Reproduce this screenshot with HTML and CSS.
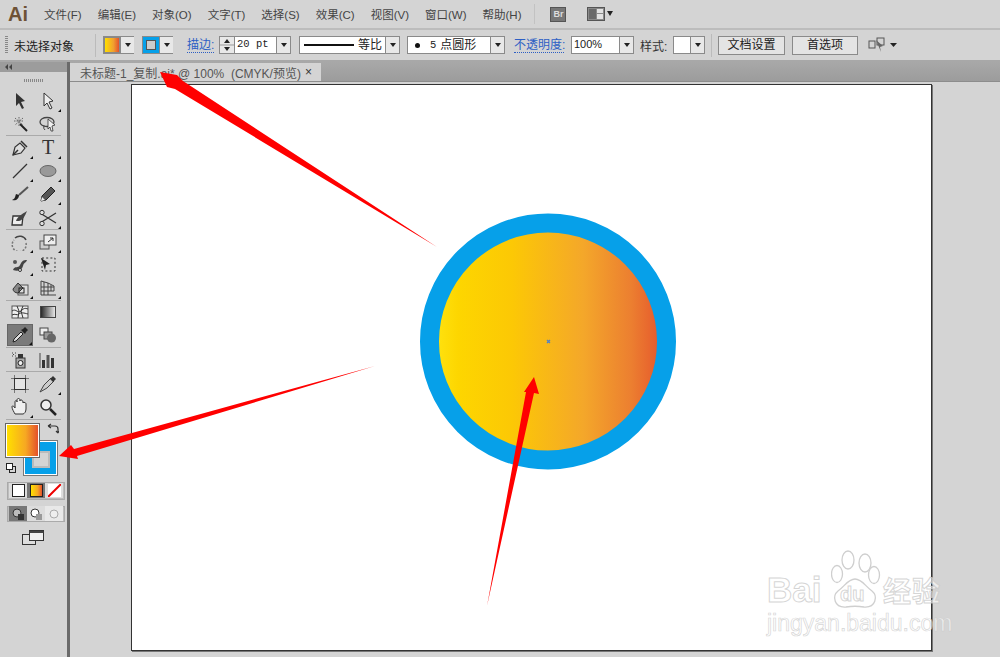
FILE: index.html
```html
<!DOCTYPE html>
<html lang="en">
<head>
    <meta charset="UTF-8">
    <meta name="viewport" content="width=device-width, initial-scale=1.0">
    <title>Adobe Illustrator</title>
    <link rel="stylesheet" href="styles.css">
</head>
<body>
    <header class="menubar">
        <span class="app-logo">Ai</span>
        <nav class="menu">
            <a>文件(F)</a>
            <a>编辑(E)</a>
            <a>对象(O)</a>
            <a>文字(T)</a>
            <a>选择(S)</a>
            <a>效果(C)</a>
            <a>视图(V)</a>
            <a>窗口(W)</a>
            <a>帮助(H)</a>
        </nav>
        <span class="menu-sep"></span>
        <span class="bridge-btn">Br</span>
        <span class="layout-btn">
            <svg width="26" height="14" viewBox="0 0 26 14">
                <rect x="0.5" y="0.5" width="17" height="13" fill="#8a8a8a" stroke="#555"/>
                <rect x="2" y="2" width="7" height="10" fill="#6a6a6a"/>
                <rect x="10" y="2" width="6" height="4" fill="#e2e2e2"/>
                <rect x="10" y="7" width="6" height="5" fill="#e2e2e2"/>
                <path d="M20 4h6l-3 5z" fill="#222"/>
            </svg>
        </span>
    </header>

    <div class="controlbar">
        <span class="grip"></span>
        <span class="status-text">未选择对象</span>
        <span class="bar-sep sep-first"></span>

        <span class="combo fill-combo">
            <span class="swatch-box"><span class="mini-gradient"></span></span>
            <span class="drop"></span>
        </span>
        <span class="combo stroke-combo">
            <span class="swatch-box"><span class="mini-stroke"></span></span>
            <span class="drop"></span>
        </span>

        <a class="link-label stroke-label">描边:</a>
        <span class="combo weight-combo">
            <span class="spinner">
                <svg width="14" height="16" viewBox="0 0 14 16"><path d="M4 6l3-4 3 4zM4 10h6l-3 4z" fill="#222"/><path d="M0 8h14" stroke="#999"/></svg>
            </span>
            <span class="field mono">20 pt</span>
            <span class="drop"></span>
        </span>
        <span class="combo line-combo">
            <span class="field line-field"><span class="line-sample"></span>等比</span>
            <span class="drop"></span>
        </span>
        <span class="combo brush-combo">
            <span class="field brush-field"><span class="dot"></span><span class="mono">5</span> 点圆形</span>
            <span class="drop"></span>
        </span>

        <a class="link-label opacity-label">不透明度:</a>
        <span class="combo opacity-combo">
            <span class="field">100%</span>
            <span class="drop"></span>
        </span>
        <span class="plain-label">样式:</span>
        <span class="combo style-combo">
            <span class="field"></span>
            <span class="drop"></span>
        </span>
        <span class="bar-sep sep-last"></span>
        <button class="bar-btn doc-btn">文档设置</button>
        <button class="bar-btn pref-btn">首选项</button>
        <svg class="arrange-icon" width="30" height="16" viewBox="0 0 30 16">
            <rect x="1" y="4" width="6" height="7" fill="none" stroke="#555"/>
            <rect x="9" y="1" width="7" height="7" fill="none" stroke="#555"/>
            <path d="M8 3l7 6-3 1 1 5z" fill="#666"/>
            <path d="M22 6h7l-3.500 4z" fill="#222"/>
        </svg>
    </div>

    <div class="main">
        <aside class="toolbox">
            <div class="toolbox-head">
                <svg width="8" height="6" viewBox="0 0 8 6"><path d="M3 0v6L0 3zM7 0v6L4 3z" fill="#444"/></svg>
            </div>
            <div class="toolbox-grip"></div>

            <div class="tool-group">
                <span class="tool"><svg viewBox="0 0 18 18"><path d="M5 1l9 8-4 1 3 6-2 1-3-6-3 3z" fill="#333"/></svg></span>
                <span class="tool more"><svg viewBox="0 0 18 18"><path d="M5 1l9 8-4 1 3 6-2 1-3-6-3 3z" fill="#eee" stroke="#333"/></svg></span>
                <span class="tool"><svg viewBox="0 0 18 18"><path d="M8 2v9M3 6h10M4 3l8 7M12 3l-8 7" stroke="#666" stroke-dasharray="1.500 1" fill="none"/><path d="M9 9l7 7" stroke="#222" stroke-width="2"/></svg></span>
                <span class="tool"><svg viewBox="0 0 18 18"><ellipse cx="8" cy="7" rx="7" ry="4.500" fill="none" stroke="#444" stroke-width="1.300"/><path d="M5 10q-1 4 1 5" fill="none" stroke="#444"/><path d="M9 4l7 6-3 1 1 5-2 0-1-4-2 2z" fill="#eee" stroke="#333" stroke-width=".8"/></svg></span>
            </div>

            <div class="tool-group">
                <span class="tool more"><svg viewBox="0 0 18 18"><path d="M2 16l2-8 5-4 5 5-4 5z" fill="#ddd" stroke="#333" stroke-width="1.200"/><path d="M2 16l5-5M10 2l6 6" stroke="#333" stroke-width="1.500"/></svg></span>
                <span class="tool more type-tool">T</span>
                <span class="tool more"><svg viewBox="0 0 18 18"><path d="M2 16L16 2" stroke="#333" stroke-width="1.300"/></svg></span>
                <span class="tool more"><svg viewBox="0 0 18 18"><ellipse cx="9" cy="9" rx="8" ry="5.500" fill="#999" stroke="#666"/></svg></span>
                <span class="tool"><svg viewBox="0 0 18 18"><path d="M8 10L17 2" stroke="#555" stroke-width="2"/><path d="M1 15c4 1 7-1 7-5l-3-1c-1 3-1 5-4 6z" fill="#222"/></svg></span>
                <span class="tool more"><svg viewBox="0 0 18 18"><path d="M2 16l1-5 9-9 4 4-9 9z" fill="#555" stroke="#222"/><path d="M2 16l1-4 3 3z" fill="#eee"/></svg></span>
                <span class="tool"><svg viewBox="0 0 18 18"><path d="M2 7h10l-1 9H1z" fill="#eee" stroke="#333" stroke-width="1.300"/><path d="M5 12c1-4 6-7 11-10-2 5-4 9-8 10z" fill="#444"/></svg></span>
                <span class="tool more"><svg viewBox="0 0 18 18"><path d="M1 4l16 10M1 14L17 4" stroke="#333" stroke-width="1.300"/><circle cx="3" cy="3.500" r="2.200" fill="#ddd" stroke="#333"/><circle cx="3" cy="14.500" r="2.200" fill="#ddd" stroke="#333"/></svg></span>
            </div>

            <div class="tool-group">
                <span class="tool more"><svg viewBox="0 0 18 18"><path d="M4 5a7 7 0 0 1 11 2" fill="none" stroke="#444" stroke-width="1.500"/><path d="M15 10a7 7 0 1 1-12-3" fill="none" stroke="#777" stroke-width="1.500" stroke-dasharray="2 1.500"/></svg></span>
                <span class="tool more"><svg viewBox="0 0 18 18"><rect x="1" y="8" width="9" height="8" fill="#ccc" stroke="#555"/><rect x="5" y="2" width="12" height="10" fill="#eee" stroke="#444"/><path d="M9 9l5-4M11 5h3v3" stroke="#333" fill="none"/></svg></span>
                <span class="tool more"><svg viewBox="0 0 18 18"><path d="M2 14c2-5 5-1 7-5s3-5 7-5c-1 3-3 2-4 6s-5 6-10 4z" fill="#444"/><circle cx="4" cy="6" r="2" fill="#555"/><circle cx="9" cy="14" r="1.500" fill="#eee" stroke="#333"/></svg></span>
                <span class="tool"><svg viewBox="0 0 18 18"><rect x="3" y="2" width="13" height="13" fill="none" stroke="#333" stroke-dasharray="2 2.200"/><path d="M2 2l9 6-4 1-1 5z" fill="#222"/></svg></span>
                <span class="tool more"><svg viewBox="0 0 18 18"><rect x="7" y="6" width="10" height="10" fill="#ddd" stroke="#555"/><path d="M2 10l5-6 5 5-5 5c-3 0-5-2-5-4z" fill="#888" stroke="#333"/><rect x="8" y="9" width="5" height="5" fill="none" stroke="#222"/></svg></span>
                <span class="tool more"><svg viewBox="0 0 18 18"><path d="M2 2v14h15M2 2l7 2v12M9 4l6 3v5H2M5 3v13M12 6v6M2 8h13" fill="none" stroke="#444"/></svg></span>
            </div>

            <div class="tool-group">
                <span class="tool"><svg viewBox="0 0 18 18"><rect x="1" y="3" width="16" height="12" fill="#eee" stroke="#555"/><path d="M1 8c4-3 6 3 9 0s4-3 7-2M1 12c3-2 5 1 7-1s5-1 9 0M6 3l2 5-1 7M12 3l-2 5 2 7" fill="none" stroke="#333"/></svg></span>
                <span class="tool"><svg viewBox="0 0 18 18"><defs><linearGradient id="grayRamp"><stop offset="0" stop-color="#222"/><stop offset="1" stop-color="#eee"/></linearGradient></defs><rect x="1.500" y="3.500" width="15" height="11" fill="url(#grayRamp)" stroke="#444"/></svg></span>
                <span class="tool more active"><svg viewBox="0 0 18 18"><path d="M2 16l1-3 7-7 2 2-7 7z" fill="#ddd" stroke="#222"/><path d="M10 4l4 4 1-2 2-2-3-3-2 2z" fill="#222"/></svg></span>
                <span class="tool"><svg viewBox="0 0 18 18"><rect x="1" y="2" width="8" height="7" fill="#eee" stroke="#444"/><rect x="5" y="6" width="8" height="7" fill="#999" stroke="#444"/><circle cx="12.500" cy="12" r="4.500" fill="#666"/></svg></span>
            </div>

            <div class="tool-group">
                <span class="tool"><svg viewBox="0 0 18 18"><rect x="5" y="7" width="9" height="10" fill="#aaa" stroke="#333"/><circle cx="9.500" cy="12" r="2.500" fill="#eee" stroke="#222"/><rect x="7" y="3" width="5" height="4" fill="#333"/><path d="M1 2h1M4 2h1M1 5h1M4 5h1M2 3.500h1" stroke="#444"/></svg></span>
                <span class="tool"><svg viewBox="0 0 18 18"><path d="M1 2v15" stroke="#444"/><rect x="3" y="9" width="3" height="8" fill="#333"/><rect x="7.500" y="4" width="3" height="13" fill="#555"/><rect x="12" y="7" width="3" height="10" fill="#333"/></svg></span>
            </div>

            <div class="tool-group">
                <span class="tool"><svg viewBox="0 0 18 18"><rect x="3.500" y="3.500" width="11" height="11" fill="#e4e4e4" stroke="#333"/><path d="M3.500 0v3M14.500 0v3M3.500 15v3M14.500 15v3M0 3.500h3M15 3.500h3M0 14.500h3M15 14.500h3" stroke="#777"/></svg></span>
                <span class="tool more"><svg viewBox="0 0 18 18"><path d="M1 17l4-7 7-7 3 3-7 7z" fill="#ccc" stroke="#444"/><path d="M11 4l3-3 3 3-3 3z" fill="#333"/></svg></span>
                <span class="tool more"><svg viewBox="0 0 18 18"><path d="M4 16c-1-2-3-5-3-7s2-1 3 1V4c0-2 2-2 2 0V2c0-2 3-2 3 0v1c0-2 3-1 3 1v1c0-1 3-1 3 1v5c0 3-2 5-3 5z" fill="#f0f0f0" stroke="#333"/></svg></span>
                <span class="tool"><svg viewBox="0 0 18 18"><circle cx="7" cy="7" r="5" fill="#eee" stroke="#333" stroke-width="1.500"/><path d="M11 11l6 6" stroke="#222" stroke-width="2.500"/></svg></span>
            </div>

            <div class="color-well">
                <span class="stroke-large"><span class="stroke-hole"></span></span>
                <span class="fill-large"></span>
                <svg class="swap-icon" width="12" height="12" viewBox="0 0 12 12"><path d="M1 3h7q3 0 3 3v4M1 3l3-2M1 3l3 2M11 10l-2-2M11 10l1-2" fill="none" stroke="#333" stroke-width="1.200"/></svg>
                <span class="default-icon"></span>
            </div>

            <div class="mode-row paint-row">
                <span class="mode-cell"><span class="paint-none"></span></span>
                <span class="mode-cell on"><span class="paint-grad"></span></span>
                <span class="mode-cell"><svg width="13" height="13" viewBox="0 0 13 13"><rect width="13" height="13" fill="#fff"/><path d="M0 13L13 0" stroke="#e00" stroke-width="2"/></svg></span>
            </div>
            <div class="mode-row draw-row">
                <span class="mode-cell on"><svg width="12" height="12" viewBox="0 0 12 12"><circle cx="5" cy="5" r="4" fill="#bbb" stroke="#333"/><rect x="6" y="6" width="6" height="6" fill="#333"/></svg></span>
                <span class="mode-cell"><svg width="12" height="12" viewBox="0 0 12 12"><circle cx="5" cy="5" r="4" fill="#fff" stroke="#333"/><rect x="6" y="6" width="6" height="6" fill="#999"/></svg></span>
                <span class="mode-cell faded"><svg width="12" height="12" viewBox="0 0 12 12"><circle cx="6" cy="6" r="4" fill="#eee" stroke="#aaa"/></svg></span>
            </div>
            <svg class="screen-icon" width="22" height="15" viewBox="0 0 22 15">
                <rect x="0.500" y="4.500" width="13" height="10" fill="#ddd" stroke="#333"/>
                <rect x="7.500" y="0.500" width="14" height="10" fill="#f0f0f0" stroke="#333"/>
                <path d="M7.500 1h14v2h-14z" fill="#444"/>
            </svg>
        </aside>

        <section class="workspace">
            <div class="tabstrip">
                <div class="doc-tab">
                    <span>未标题-1_复制.ai* @ 100%  (CMYK/预览)</span>
                    <span class="tab-close">×</span>
                </div>
            </div>
            <div class="canvas">
                <div class="artboard">
                    <svg class="art" width="800" height="566" viewBox="0 0 800 566">
                        <defs>
                            <linearGradient id="sun">
                                <stop offset="0" stop-color="#ffe614"/>
                                <stop offset="0.12" stop-color="#fdd600"/>
                                <stop offset="0.35" stop-color="#fcc805"/>
                                <stop offset="0.65" stop-color="#f4a72a"/>
                                <stop offset="0.85" stop-color="#ec7f30"/>
                                <stop offset="1" stop-color="#e4512c"/>
                            </linearGradient>
                        </defs>
                        <circle cx="416" cy="256.500" r="118.500" fill="url(#sun)" stroke="#06a0e9" stroke-width="19"/>
                        <path d="M415 255l3 3M418 255l-3 3" stroke="#4a7fd0" stroke-width="1.200"/>
                    </svg>
                </div>
            </div>
        </section>
    </div>

    <!-- annotation arrows drawn over the screenshot -->
    <svg class="arrows" width="1000" height="657" viewBox="0 0 1000 657">
        <path d="M437 247L183 81 177 75 160 72 167 87 175 89z" fill="#ff0000"/>
        <path d="M375 366L74 449 71 445 59 456 78 459 77 456z" fill="#ff0000"/>
        <path d="M487 606L526 392 524 392 534 377 539 394 534 393z" fill="#ff0000"/>
    </svg>

    <div class="watermark">
        <svg class="paw" width="50" height="60" viewBox="0 0 50 60">
            <g fill="#fff" fill-opacity=".6" stroke="#cfcfcf" stroke-width="1.300">
                <ellipse cx="17" cy="10" rx="6" ry="9"/>
                <ellipse cx="34" cy="13" rx="6" ry="9"/>
                <ellipse cx="6" cy="24" rx="5.500" ry="8.500"/>
                <ellipse cx="43" cy="25" rx="5.500" ry="8.500"/>
                <path d="M24 29c7 0 10 7 17 12 6 5 4 17-8 16-6-1-12-1-18 0-12 1-14-11-8-16 7-5 10-12 17-12z"/>
            </g>
        </svg>
        <div class="wm-brand"><span class="wm-bai">Bai</span><span class="wm-du">du</span><span class="wm-cn">经验</span></div>
        <div class="wm-url">jingyan.baidu.com</div>
    </div>
</body>
</html>
```

FILE: styles.css
```css
* {
    box-sizing: border-box;
}
body {
    font-family: "Liberation Sans", "Noto Sans CJK SC", sans-serif;
    font-size: 11px;
    background-color: #d4d4d4;
    color: #333;
    margin: 0;
    padding: 0;
    width: 1000px;
    height: 657px;
    overflow: hidden;
    position: relative;
}
.menubar {
    height: 30px;
    display: flex;
    align-items: center;
    border-bottom: 2px solid #bcbcbc;
    padding-left: 8px;
}
.app-logo {
    font-size: 20px;
    font-weight: bold;
    color: #6e5236;
    width: 36px;
}
.menu {
    display: flex;
    gap: 16px;
    font-size: 11.500px;
}
.menu a {
    white-space: nowrap;
    color: #444;
}
.menu-sep {
    width: 1px;
    height: 20px;
    background-color: #c2c2c2;
    margin-left: 13px;
}
.bridge-btn {
    width: 16px;
    height: 15px;
    margin-left: 15px;
    background-color: #777;
    border: 1px solid #555;
    color: #ddd;
    font-size: 9px;
    font-weight: bold;
    text-align: center;
    line-height: 13px;
}
.layout-btn {
    margin-left: 21px;
    display: flex;
}
.controlbar {
    height: 32px;
    display: flex;
    align-items: center;
    border-bottom: 2px solid #a8a8a8;
    position: relative;
    padding-left: 5px;
}
.controlbar > * {
    flex-shrink: 0;
}
.grip {
    width: 3px;
    height: 18px;
    background-image: repeating-linear-gradient(#888 0 1px, transparent 1px 2px);
}
.status-text {
    font-size: 12px;
    width: 60px;
    margin-left: 6px;
    white-space: nowrap;
    color: #222;
}
.bar-sep {
    width: 1px;
    height: 23px;
    background-color: #bbb;
}
.sep-first {
    margin-left: 21px;
}
.combo {
    display: flex;
    height: 18px;
    border: 1px solid #8a8a8a;
    background-color: #e6e6e6;
}
.drop {
    width: 14px;
    flex-shrink: 0;
    border-left: 1px solid #8a8a8a;
    background: #e8e8e8;
    display: flex;
    align-items: center;
    justify-content: center;
}
.drop::after {
    content: "";
    border-left: 3.500px solid transparent;
    border-right: 3.500px solid transparent;
    border-top: 4px solid #222;
}
.field {
    flex: 1;
    background-color: #fff;
    line-height: 15px;
    padding-left: 2px;
    color: #222;
    white-space: nowrap;
    font-size: 11px;
}
.mono {
    font-family: "Liberation Mono", monospace;
    font-size: 10.500px;
}
.swatch-box {
    flex: 1;
    display: flex;
    align-items: center;
    justify-content: center;
}
.fill-combo {
    width: 31px;
    margin-left: 7px;
}
.stroke-combo {
    width: 31px;
    margin-left: 8px;
}
.mini-gradient {
    display: block;
    width: 16px;
    height: 16px;
    background: linear-gradient(90deg, #ffdf00, #f0a030 60%, #e4512c);
    border: 1px solid #888;
}
.mini-stroke {
    display: block;
    width: 16px;
    height: 16px;
    border: 3px solid #06a0e9;
    background-color: #ccc;
    outline: 1px solid #555;
    outline-offset: -4px;
}
.link-label {
    color: #2d5fc4;
    border-bottom: 1px dotted #2d5fc4;
    font-size: 12px;
    line-height: 14px;
    white-space: nowrap;
}
.stroke-label {
    margin-left: 14px;
    width: 27px;
}
.weight-combo {
    width: 72px;
    margin-left: 5px;
}
.spinner {
    width: 15px;
    flex-shrink: 0;
    border-right: 1px solid #8a8a8a;
    background-color: #e8e8e8;
    display: flex;
}
.line-combo {
    width: 101px;
    margin-left: 8px;
}
.line-field {
    display: flex;
    align-items: center;
    gap: 4px;
    font-size: 12px;
}
.line-sample {
    width: 50px;
    margin-left: 2px;
    border-top: 2px solid #111;
}
.brush-combo {
    width: 98px;
    margin-left: 7px;
}
.brush-field {
    display: flex;
    align-items: center;
    gap: 4px;
    font-size: 12px;
}
.dot {
    width: 5px;
    height: 5px;
    border-radius: 50%;
    background-color: #111;
    margin: 0 6px 0 5px;
}
.opacity-label {
    margin-left: 9px;
    width: 50px;
}
.opacity-combo {
    width: 63px;
    margin-left: 7px;
}
.plain-label {
    font-size: 12px;
    margin-left: 6px;
    width: 27px;
    white-space: nowrap;
}
.style-combo {
    width: 32px;
    margin-left: 6px;
}
.sep-last {
    margin-left: 6px;
}
.bar-btn {
    height: 19px;
    padding: 0;
    border: 1px solid #8a8a8a;
    background-color: #e4e4e4;
    font-family: inherit;
    font-size: 12px;
    line-height: 15px;
    color: #222;
}
.doc-btn {
    width: 67px;
    margin-left: 6px;
}
.pref-btn {
    width: 66px;
    margin-left: 7px;
}
.arrange-icon {
    margin-left: 10px;
}
.main {
    display: flex;
    height: 595px;
}
.toolbox {
    width: 70px;
    flex-shrink: 0;
    border-right: 3px solid #6a6a6a;
    display: flex;
    flex-direction: column;
    position: relative;
}
.toolbox-head {
    height: 10px;
    background-color: #9c9c9c;
    display: flex;
    align-items: center;
    padding-left: 5px;
}
.toolbox-grip {
    height: 17px;
    margin: 0 24px;
    background: repeating-linear-gradient(90deg, #888 0 1px, transparent 1px 2px) center / 100% 3px no-repeat;
}
.tool-group {
    display: grid;
    grid-template-columns: 28px 28px;
    grid-auto-rows: 23.200px;
    margin: 0 6px;
    border-bottom: 1px solid #aaa;
    justify-items: center;
    align-items: center;
}
.tool {
    width: 26px;
    height: 22px;
    display: flex;
    align-items: center;
    justify-content: center;
    position: relative;
}
.tool svg {
    width: 18px;
    height: 18px;
}
.more::after {
    content: "";
    position: absolute;
    right: 0;
    bottom: 0;
    border-left: 3px solid transparent;
    border-bottom: 3px solid #111;
}
.type-tool {
    font-family: "Liberation Serif", serif;
    font-size: 20px;
    color: #333;
}
.active {
    background-color: #7a7a7a;
    border: 1px solid #666;
}
.color-well {
    height: 58px;
    position: relative;
    margin-top: 4px;
    flex-shrink: 0;
}
.fill-large {
    position: absolute;
    left: 6px;
    top: 0;
    width: 33px;
    height: 33px;
    background: linear-gradient(90deg, #ffdf00, #f6a822 60%, #e4512c);
    border: 1px solid #fff;
    outline: 1px solid #666;
}
.stroke-large {
    position: absolute;
    left: 24px;
    top: 17px;
    width: 33px;
    height: 34px;
    background-color: #06a0e9;
    border: 1px solid #fff;
    outline: 1px solid #777;
    display: flex;
    align-items: flex-end;
    justify-content: center;
    padding-bottom: 6px;
}
.stroke-hole {
    width: 18px;
    height: 17px;
    background-color: #d4d4d4;
    border: 2px solid #bbb;
}
.swap-icon {
    position: absolute;
    left: 47px;
    top: -1px;
}
.default-icon {
    position: absolute;
    left: 6px;
    top: 39px;
    width: 7px;
    height: 7px;
    border: 1px solid #222;
    background-color: #fff;
    box-shadow: 3px 3px 0 -1px #d4d4d4, 3px 3px 0 0 #222;
}
.mode-row {
    display: flex;
    align-items: center;
    justify-content: space-between;
    width: 58px;
    height: 18px;
    margin-left: 7px;
    padding: 0 1px;
    background-color: #bdbdbd;
    border: 1px solid #aaa;
    flex-shrink: 0;
}
.draw-row {
    margin-top: 6px;
    height: 16px;
}
.mode-cell {
    width: 18px;
    height: 15px;
    display: flex;
    align-items: center;
    justify-content: center;
    background-color: #dcdcdc;
}
.mode-cell.on {
    background-color: #777;
}
.mode-cell.faded {
    background-color: #e8e8e8;
}
.paint-none {
    width: 13px;
    height: 13px;
    background-color: #fff;
    border: 1px solid #222;
}
.paint-grad {
    width: 13px;
    height: 13px;
    background: linear-gradient(90deg, #ffdf00, #f6a822 60%, #e4512c);
    border: 1px solid #222;
}
.screen-icon {
    margin: 8px 0 0 22px;
    flex-shrink: 0;
}
.workspace {
    flex: 1;
    display: flex;
    flex-direction: column;
}
.tabstrip {
    height: 20px;
    background: linear-gradient(#a8a8a8, #9c9c9c);
    border-bottom: 1px solid #8c8c8c;
    display: flex;
    align-items: flex-end;
}
.doc-tab {
    width: 251px;
    height: 18px;
    background-color: #d4d4d4;
    display: flex;
    align-items: center;
    justify-content: space-between;
    padding: 0 9px 0 10px;
    font-size: 12px;
    color: #555;
    white-space: pre;
}
.tab-close {
    font-size: 12px;
    color: #333;
}
.canvas {
    flex: 1;
    padding: 2px 0 0 61px;
}
.artboard {
    width: 801px;
    height: 567px;
    background-color: #fff;
    border: 1px solid #333;
    box-shadow: 1px 1px 0 #777;
}
.art {
    display: block;
}
.arrows {
    position: absolute;
    left: 0;
    top: 0;
}
.watermark {
    position: absolute;
    left: 767px;
    top: 550px;
    width: 180px;
    height: 84px;
}
.paw {
    position: absolute;
    left: 64px;
    top: 0;
}
.wm-brand {
    position: absolute;
    left: 0;
    top: 21px;
    width: 180px;
    font-size: 35px;
    line-height: 38px;
    font-weight: bold;
    color: rgba(255, 255, 255, 0.6);
    -webkit-text-stroke: 1px rgba(200, 200, 200, 0.75);
    white-space: nowrap;
}
.wm-bai {
    display: inline-block;
    width: 73px;
}
.wm-du {
    display: inline-block;
    width: 43px;
    font-size: 20px;
    vertical-align: 1px;
}
.wm-cn {
    font-size: 28px;
    font-family: "Noto Sans CJK SC", sans-serif;
    letter-spacing: 1px;
}
.wm-url {
    position: absolute;
    left: 0;
    top: 60px;
    font-size: 23px;
    line-height: 26px;
    color: rgba(255, 255, 255, 0.6);
    -webkit-text-stroke: 0.7px rgba(200, 200, 200, 0.75);
    white-space: nowrap;
}
```
